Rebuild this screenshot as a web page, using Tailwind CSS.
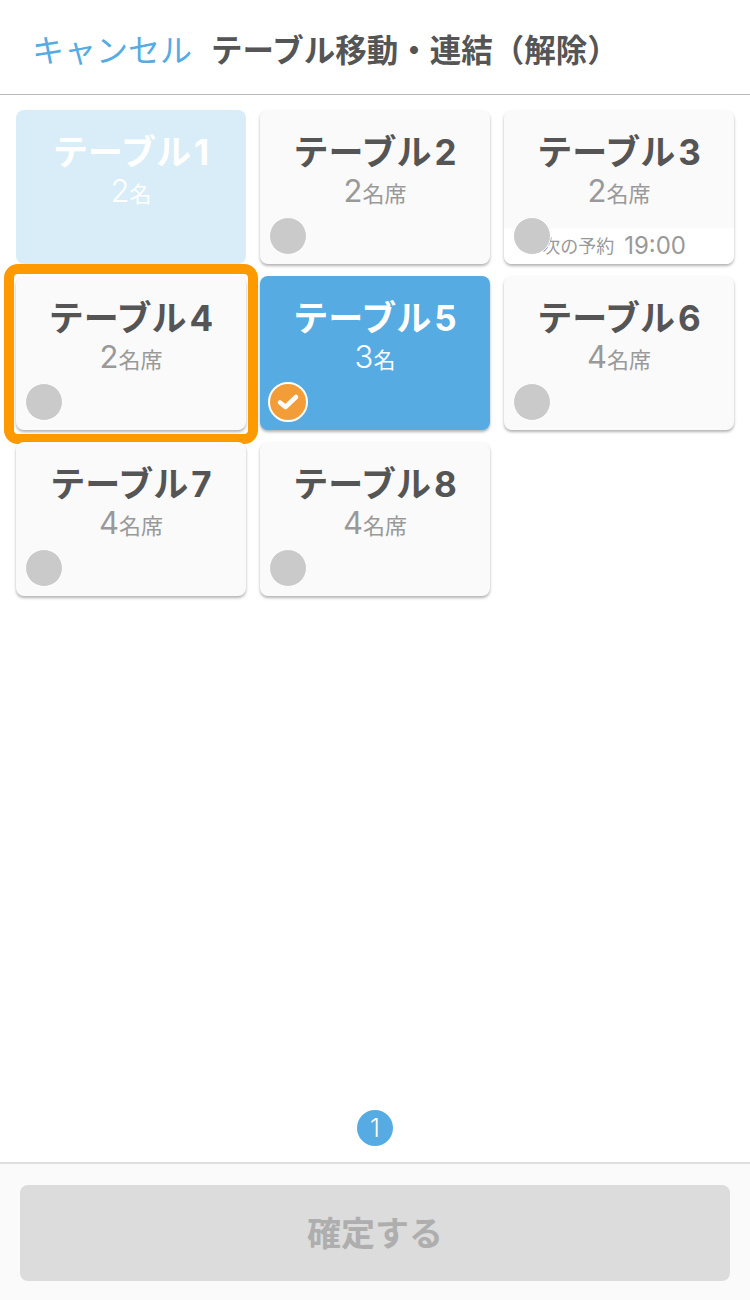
<!DOCTYPE html>
<html lang="ja">
<head>
  <meta charset="UTF-8">
  <meta name="viewport" content="width=device-width, initial-scale=1">
  <title>テーブル移動・連結（解除）</title>
  <script src="https://cdn.jsdelivr.net/npm/@tailwindcss/browser@4"></script>
</head>
<body class="bg-white font-['Inter','Noto_Sans_CJK_JP',sans-serif]">
  <div class="flex flex-col h-[1300px] w-[750px] overflow-hidden">

    <!-- Header -->
    <div class="flex items-center h-[95px] pl-[32px] pt-[8px] border-b border-[#b9b9b9]">
      <span class="text-[32px] leading-none text-[#55abe2]">キャンセル</span>
      <span class="ml-[19px] text-[31.5px] leading-none font-bold text-[#555]">テーブル移動・連結（解除）</span>
    </div>

    <!-- Tables -->
    <div class="flex-1 grid grid-cols-[230px_230px_230px] auto-rows-[154px] gap-x-[14px] gap-y-[12px] pt-[15px] pl-[16px]">

      <div class="relative rounded-lg bg-[#d8edf8] text-center text-white pt-[17px]">
        <div class="text-[35px] leading-[50px] font-bold">テーブル<span class="ml-[3px]">1</span></div>
        <div class="text-[22px] leading-[28px]"><span class="text-[31px] font-light">2</span>名</div>
      </div>

      <div class="relative rounded-lg bg-[#fafafa] shadow-[0_2px_3px_rgba(0,0,0,0.3)] text-center pt-[17px]">
        <div class="text-[35px] leading-[50px] font-bold text-[#555]">テーブル<span class="ml-[3px]">2</span></div>
        <div class="text-[22px] leading-[28px] text-[#999]"><span class="text-[31px]">2</span>名席</div>
        <div class="absolute left-[9px] bottom-[9px] size-[38px] rounded-full bg-[#cacaca] border border-white"></div>
      </div>

      <div class="relative rounded-lg bg-[#fafafa] shadow-[0_2px_3px_rgba(0,0,0,0.3)] text-center pt-[17px]">
        <div class="text-[35px] leading-[50px] font-bold text-[#555]">テーブル<span class="ml-[3px]">3</span></div>
        <div class="text-[22px] leading-[28px] text-[#999]"><span class="text-[31px]">2</span>名席</div>
        <div class="absolute left-0 right-0 bottom-0 h-[36px] flex items-center justify-end gap-[10px] pr-[48px] rounded-b-lg bg-white text-[#999]">
          <span class="text-[18px]">次の予約</span>
          <span class="text-[24px]">19:00</span>
        </div>
        <div class="absolute left-[9px] bottom-[9px] size-[38px] rounded-full bg-[#cacaca] border border-white"></div>
      </div>

      <div class="relative rounded-lg bg-[#fafafa] shadow-[0_2px_3px_rgba(0,0,0,0.3)] text-center pt-[17px]">
        <div class="text-[35px] leading-[50px] font-bold text-[#555]">テーブル<span class="ml-[3px]">4</span></div>
        <div class="text-[22px] leading-[28px] text-[#999]"><span class="text-[31px]">2</span>名席</div>
        <div class="absolute left-[9px] bottom-[9px] size-[38px] rounded-full bg-[#cacaca] border border-white"></div>
        <!-- focus ring -->
        <div class="absolute -left-[12px] -right-[12px] -top-[12px] -bottom-[14px] rounded-[14px] border-[10px] border-[#ff9900]"></div>
      </div>

      <div class="relative rounded-lg bg-[#55abe2] shadow-[0_2px_3px_rgba(0,0,0,0.3)] text-center text-white pt-[17px]">
        <div class="text-[35px] leading-[50px] font-bold">テーブル<span class="ml-[3px]">5</span></div>
        <div class="text-[22px] leading-[28px]"><span class="text-[31px] font-light">3</span>名</div>
        <div class="absolute left-[8px] bottom-[8px] size-[40px] rounded-full bg-[#f39d38] border-2 border-white flex items-center justify-center">
          <svg viewBox="0 0 24 24" class="size-[24px]" fill="none" stroke="white" stroke-width="4.5" stroke-linecap="round" stroke-linejoin="round"><path d="M4 12.5l5.5 4.5 10.5-10"/></svg>
        </div>
      </div>

      <div class="relative rounded-lg bg-[#fafafa] shadow-[0_2px_3px_rgba(0,0,0,0.3)] text-center pt-[17px]">
        <div class="text-[35px] leading-[50px] font-bold text-[#555]">テーブル<span class="ml-[3px]">6</span></div>
        <div class="text-[22px] leading-[28px] text-[#999]"><span class="text-[31px]">4</span>名席</div>
        <div class="absolute left-[9px] bottom-[9px] size-[38px] rounded-full bg-[#cacaca] border border-white"></div>
      </div>

      <div class="relative rounded-lg bg-[#fafafa] shadow-[0_2px_3px_rgba(0,0,0,0.3)] text-center pt-[17px]">
        <div class="text-[35px] leading-[50px] font-bold text-[#555]">テーブル<span class="ml-[3px]">7</span></div>
        <div class="text-[22px] leading-[28px] text-[#999]"><span class="text-[31px]">4</span>名席</div>
        <div class="absolute left-[9px] bottom-[9px] size-[38px] rounded-full bg-[#cacaca] border border-white"></div>
      </div>

      <div class="relative rounded-lg bg-[#fafafa] shadow-[0_2px_3px_rgba(0,0,0,0.3)] text-center pt-[17px]">
        <div class="text-[35px] leading-[50px] font-bold text-[#555]">テーブル<span class="ml-[3px]">8</span></div>
        <div class="text-[22px] leading-[28px] text-[#999]"><span class="text-[31px]">4</span>名席</div>
        <div class="absolute left-[9px] bottom-[9px] size-[38px] rounded-full bg-[#cacaca] border border-white"></div>
      </div>
    </div>

    <!-- Pager -->
    <div class="flex justify-center pb-[16px]">
      <div class="size-[36px] rounded-full bg-[#55abe2] flex items-center justify-center text-white text-[25px] font-light leading-none">1</div>
    </div>

    <!-- Footer -->
    <div class="h-[138px] border-t-2 border-[#dedede] bg-[#fafafa] px-[20px] pt-[21px]">
      <button class="w-full h-[96px] pt-[1px] rounded-lg bg-[#dcdcdc] text-[34px] font-bold text-[#aeaeae]">確定する</button>
    </div>
  </div>
</body>
</html>
